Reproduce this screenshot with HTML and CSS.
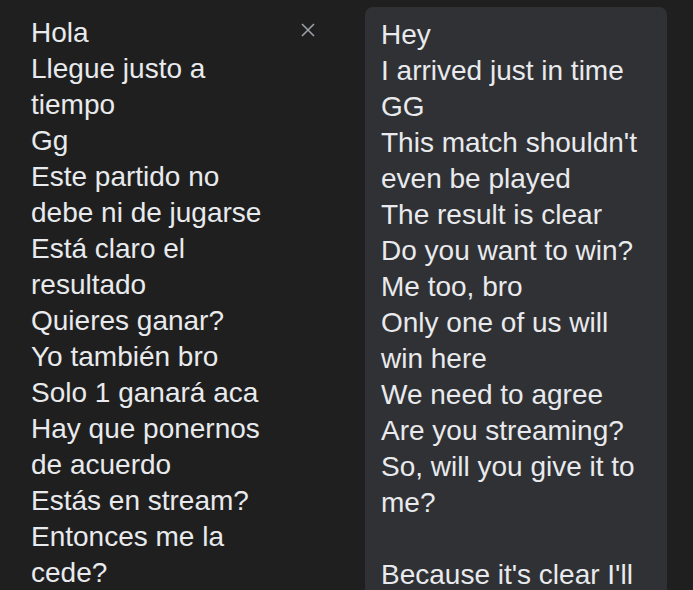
FILE: index.html
```
<!DOCTYPE html>
<html lang="es">
<head>
<meta charset="utf-8" />
<title>Traductor</title>
<link rel="stylesheet" href="styles.css">
</head>
<body>
<div id="translator">
  <div id="source">
    <div class="text">Hola
Llegue justo a tiempo
Gg
Este partido no debe ni de jugarse
Está claro el resultado
Quieres ganar?
Yo también bro
Solo 1 ganará aca
Hay que ponernos de acuerdo
Estás en stream?
Entonces me la cede?

Porque está claro que ganaré</div>
    <button class="clear" title="Borrar texto">
      <svg width="14" height="14" viewBox="0 0 14 14"><path d="M1 1 L13 13 M13 1 L1 13" stroke="#9aa0a6" stroke-width="1.6" fill="none" /></svg>
    </button>
  </div>
  <div id="target">
    <div class="text">Hey
I arrived just in time
GG
This match shouldn't even be played
The result is clear
Do you want to win?
Me too, bro
Only one of us will win here
We need to agree
Are you streaming?
So, will you give it to me?

Because it's clear I'll win</div>
  </div>
</div>
</body>
</html>
```
FILE: styles.css
```
html, body { margin:0; padding:0; background:#1f1f1f; overflow:hidden; }
body { font-family:"Liberation Sans", Arial, sans-serif; color:#e8eaed; }
#translator { display:flex; align-items:flex-start; }
.text { font-size:28px; line-height:36px; white-space:pre-wrap; }
#source { display:flex; align-items:flex-start; width:365px; box-sizing:border-box; padding:10px 0 0 31px; }
#source .text { width:245px; padding-top:5px; }
.clear { width:40px; height:40px; margin-left:12px; padding:0; border:0; border-radius:50%; background:none; display:flex; align-items:center; justify-content:center; cursor:pointer; }
#target { width:302px; box-sizing:border-box; margin-top:7px; min-height:620px; padding:10px 16px; background:#303134; border-radius:8px; }
```
